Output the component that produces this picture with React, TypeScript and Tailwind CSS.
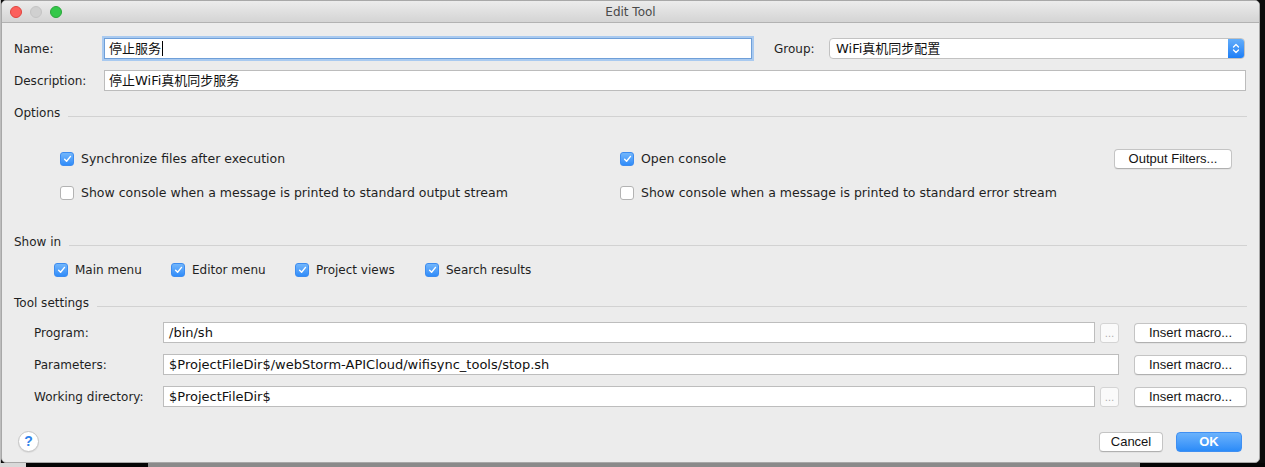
import React from "react";

const LBL = "font-['DejaVu_Sans','Noto_Sans_CJK_SC',sans-serif] text-[12px] text-[#1f1f1f] whitespace-nowrap";
const OLBL = "font-['DejaVu_Sans','Noto_Sans_CJK_SC',sans-serif] text-[12.5px] text-[#1f1f1f] whitespace-nowrap";
const INP = "font-['DejaVu_Sans','Noto_Sans_CJK_SC',sans-serif] text-[13px] text-[#111] whitespace-nowrap";
const BTN =
  "flex items-center justify-center rounded-[4px] border border-[#c4c4c4] border-b-[#b0b0b0] bg-white shadow-[0_1px_0_rgba(0,0,0,0.04)] font-['Liberation_Sans',sans-serif] text-[13px] text-[#141414] whitespace-nowrap";

function Check({ checked }: { checked: boolean }) {
  if (checked) {
    return (
      <span className="flex h-[14px] w-[14px] shrink-0 items-center justify-center rounded-[3px] border border-[#3d8cf0] bg-gradient-to-b from-[#72b6fb] to-[#2f8cf9]">
        <svg width="9" height="8" viewBox="0 0 9 8">
          <path d="M1.6 4.3 L3.6 6.3 L7.5 1.4" stroke="white" strokeWidth="1.4" fill="none" strokeLinecap="round" strokeLinejoin="round" />
        </svg>
      </span>
    );
  }
  return <span className="h-[14px] w-[14px] shrink-0 rounded-[3px] border border-[#b3b3b3] bg-white" />;
}

function Header({ title }: { title: string }) {
  return (
    <div className="flex h-[16px] items-center gap-2">
      <span className={LBL}>{title}</span>
      <span className="mt-[6px] h-px flex-1 bg-[#d2d2d2]" />
    </div>
  );
}

function ToolRow({ label, value, dots }: { label: string; value: string; dots: boolean }) {
  return (
    <div className="mt-[11px] flex h-[21px] items-center">
      <span className={LBL + " w-[149px] pl-[20px]"}>{label}</span>
      <div className="flex h-[21px] flex-1 items-center">
        <div className={INP + " flex h-[21px] flex-1 items-center border border-[#bdbdbd] bg-white pl-[5px]"}>{value}</div>
        {dots && (
          <div className="ml-[5px] flex h-[20px] w-[19px] items-end justify-center rounded-[3px] border border-[#d4d4d4] bg-[#fafafa] pb-[3px] font-['Liberation_Sans',sans-serif] text-[10px] leading-[10px] text-[#a8a8a8]">
            …
          </div>
        )}
      </div>
      <div className={BTN + " ml-[15px] h-[20px] w-[113px]"}>Insert macro...</div>
    </div>
  );
}

export default function App() {
  return (
    <div className="flex h-[467px] w-[1265px] flex-col overflow-hidden bg-[#0b0b0b]">
      <div className="flex h-[463px]">
        <div className="w-px bg-[#bdbdbd]" />
        <div className="flex h-[463px] w-[1259px] flex-col overflow-hidden rounded-[5px] border border-[#a8a8a8] bg-[#ececec]">
          {/* title bar */}
          <div className="relative flex h-[22px] shrink-0 items-center gap-[8px] border-b border-[#b2b2b2] bg-gradient-to-b from-[#ececec] to-[#d4d4d4] pl-[8px]">
            <span className="h-[12px] w-[12px] rounded-full border border-[#e0443e] bg-[#fc605c]" />
            <span className="h-[12px] w-[12px] rounded-full border border-[#c4c4c4] bg-[#d0d0d0]" />
            <span className="h-[12px] w-[12px] rounded-full border border-[#2aa63a] bg-[#34c84a]" />
            <div className="absolute inset-0 flex items-center justify-center font-['DejaVu_Sans',sans-serif] text-[12px] text-[#4a4a4a]">
              Edit Tool
            </div>
          </div>

          <div className="flex flex-1 flex-col pl-[12px] pr-[12px]">
            {/* Name / Group */}
            <div className="mt-[15px] flex h-[21px] items-center">
              <span className={LBL + " w-[90px]"}>Name:</span>
              <div className="flex h-[21px] w-[648px] items-center border border-[#6f9fd8] bg-white pl-[4px] shadow-[0_0_0_2px_#a9caf0] font-['DejaVu_Sans','Noto_Sans_CJK_SC',sans-serif] text-[13px] text-[#111]">
                停止服务
                <span className="ml-[1px] h-[15px] w-px bg-black" />
              </div>
              <span className={LBL + " ml-[22px] w-[55px]"}>Group:</span>
              <div className="mr-[2px] flex h-[21px] flex-1 items-center overflow-hidden rounded-[4px] border border-[#c2c2c2] bg-white">
                <span className="flex-1 pl-[6px] font-['DejaVu_Sans','Noto_Sans_CJK_SC',sans-serif] text-[13px] text-[#111]">
                  WiFi真机同步配置
                </span>
                <span className="flex h-full w-[16px] items-center justify-center bg-gradient-to-b from-[#62adfa] to-[#1b7ef6]">
                  <svg width="8" height="13" viewBox="0 0 8 13">
                    <path d="M1.5 5 L4 2.5 L6.5 5" stroke="white" strokeWidth="1.3" fill="none" strokeLinecap="round" strokeLinejoin="round" />
                    <path d="M1.5 8 L4 10.5 L6.5 8" stroke="white" strokeWidth="1.3" fill="none" strokeLinecap="round" strokeLinejoin="round" />
                  </svg>
                </span>
              </div>
            </div>

            {/* Description */}
            <div className="mt-[11px] flex h-[21px] items-center">
              <span className={LBL + " w-[90px]"}>Description:</span>
              <div className="mr-[1px] flex h-[21px] flex-1 items-center border border-[#bcbcbc] bg-white pl-[4px] font-['DejaVu_Sans','Noto_Sans_CJK_SC',sans-serif] text-[13px] text-[#111]">
                停止WiFi真机同步服务
              </div>
            </div>

            <div className="mt-[14px]">
              <Header title="Options" />
            </div>

            <div className="mt-[28px] flex h-[20px] items-center pl-[46px]">
              <div className="flex w-[560px] items-center gap-[7px]">
                <Check checked />
                <span className={OLBL}>Synchronize files after execution</span>
              </div>
              <div className="flex flex-1 items-center gap-[7px]">
                <Check checked />
                <span className={OLBL}>Open console</span>
              </div>
              <div className={BTN + " mr-[15px] h-[20px] w-[118px]"}>Output Filters...</div>
            </div>
            <div className="mt-[14px] flex h-[20px] items-center pl-[46px]">
              <div className="flex w-[560px] items-center gap-[7px]">
                <Check checked={false} />
                <span className={OLBL}>Show console when a message is printed to standard output stream</span>
              </div>
              <div className="flex flex-1 items-center gap-[7px]">
                <Check checked={false} />
                <span className={OLBL}>Show console when a message is printed to standard error stream</span>
              </div>
            </div>

            <div className="mt-[31px]">
              <Header title="Show in" />
            </div>
            <div className="mt-[10px] flex h-[20px] items-center pl-[40px]">
              <div className="flex w-[117px] items-center gap-[7px]">
                <Check checked />
                <span className={LBL}>Main menu</span>
              </div>
              <div className="flex w-[124px] items-center gap-[7px]">
                <Check checked />
                <span className={LBL}>Editor menu</span>
              </div>
              <div className="flex w-[130px] items-center gap-[7px]">
                <Check checked />
                <span className={LBL}>Project views</span>
              </div>
              <div className="flex items-center gap-[7px]">
                <Check checked />
                <span className={LBL}>Search results</span>
              </div>
            </div>

            <div className="mt-[15px]">
              <Header title="Tool settings" />
            </div>
            <ToolRow label="Program:" value="/bin/sh" dots />
            <ToolRow label="Parameters:" value="$ProjectFileDir$/webStorm-APICloud/wifisync_tools/stop.sh" dots={false} />
            <ToolRow label="Working directory:" value="$ProjectFileDir$" dots />

            {/* bottom buttons */}
            <div className="mt-[24px] flex h-[21px] items-center">
              <div className="ml-[4px] flex h-[21px] w-[21px] items-center justify-center rounded-full border border-[#c6c6c6] bg-white shadow-[0_1px_1px_rgba(0,0,0,0.08)] font-['Liberation_Sans',sans-serif] text-[14px] font-bold text-[#2f83ea]">
                ?
              </div>
              <div className="flex-1" />
              <div className={BTN + " h-[20px] w-[64px]"}>Cancel</div>
              <div className="ml-[13px] mr-[5px] flex h-[20px] w-[66px] items-center justify-center rounded-[4px] border border-[#3f8ff2] bg-gradient-to-b from-[#6ab2fc] to-[#2a8bf8] font-['Liberation_Sans',sans-serif] text-[13px] font-bold text-white">
                OK
              </div>
            </div>
          </div>
        </div>
      </div>
      <div className="flex h-[4px]">
        <div className="w-[26px] bg-[#d9d9d9]" />
        <div className="w-[122px] bg-[#050505]" />
        <div className="w-[992px] bg-[#8a8a8a]" />
        <div className="flex-1 bg-[#050505]" />
      </div>
    </div>
  );
}
